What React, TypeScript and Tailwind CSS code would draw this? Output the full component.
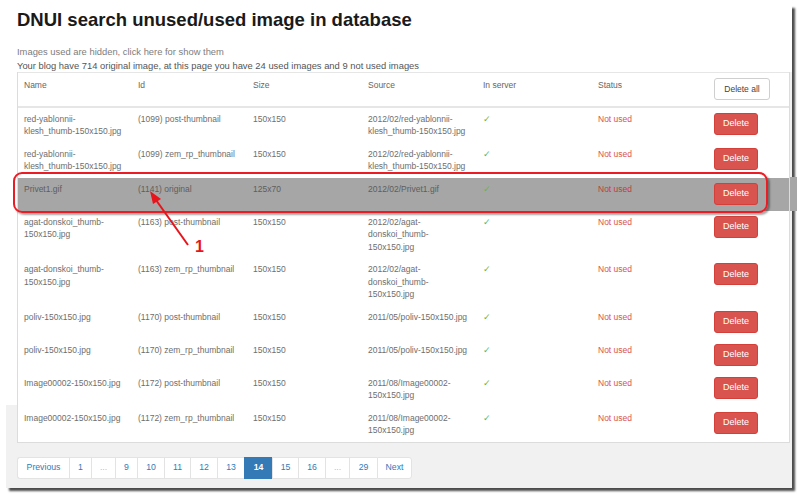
import React from "react";

type Row = {
  name: string[];
  id: string;
  size: string;
  source: string[];
  hl?: boolean;
};

const rows: Row[] = [
  { name: ["red-yablonnii-", "klesh_thumb-150x150.jpg"], id: "(1099) post-thumbnail", size: "150x150", source: ["2012/02/red-yablonnii-", "klesh_thumb-150x150.jpg"] },
  { name: ["red-yablonnii-", "klesh_thumb-150x150.jpg"], id: "(1099) zem_rp_thumbnail", size: "150x150", source: ["2012/02/red-yablonnii-", "klesh_thumb-150x150.jpg"] },
  { name: ["Privet1.gif"], id: "(1141) original", size: "125x70", source: ["2012/02/Privet1.gif"], hl: true },
  { name: ["agat-donskoi_thumb-", "150x150.jpg"], id: "(1163) post-thumbnail", size: "150x150", source: ["2012/02/agat-", "donskoi_thumb-", "150x150.jpg"] },
  { name: ["agat-donskoi_thumb-", "150x150.jpg"], id: "(1163) zem_rp_thumbnail", size: "150x150", source: ["2012/02/agat-", "donskoi_thumb-", "150x150.jpg"] },
  { name: ["poliv-150x150.jpg"], id: "(1170) post-thumbnail", size: "150x150", source: ["2011/05/poliv-150x150.jpg"] },
  { name: ["poliv-150x150.jpg"], id: "(1170) zem_rp_thumbnail", size: "150x150", source: ["2011/05/poliv-150x150.jpg"] },
  { name: ["Image00002-150x150.jpg"], id: "(1172) post-thumbnail", size: "150x150", source: ["2011/08/Image00002-", "150x150.jpg"] },
  { name: ["Image00002-150x150.jpg"], id: "(1172) zem_rp_thumbnail", size: "150x150", source: ["2011/08/Image00002-", "150x150.jpg"] },
];

const pages: { label: string; w: string; active?: boolean; dim?: boolean }[] = [
  { label: "Previous", w: "w-[52px]" },
  { label: "1", w: "w-[22px]" },
  { label: "...", w: "w-[24px]", dim: true },
  { label: "9", w: "w-[22px]" },
  { label: "10", w: "w-[27px]" },
  { label: "11", w: "w-[26px]" },
  { label: "12", w: "w-[27px]" },
  { label: "13", w: "w-[27px]" },
  { label: "14", w: "w-[28px]", active: true },
  { label: "15", w: "w-[26px]" },
  { label: "16", w: "w-[27px]" },
  { label: "...", w: "w-[24px]", dim: true },
  { label: "29", w: "w-[28px]" },
  { label: "Next", w: "w-[35px]" },
];

function Lines({ lines }: { lines: string[] }) {
  return (
    <>
      {lines.map((l, i) => (
        <div key={i} className="whitespace-nowrap">{l}</div>
      ))}
    </>
  );
}

export default function App() {
  const cell = "pl-[6px] pr-[7px] pt-[5px] pb-[5px] align-top text-left font-normal";
  return (
    <div className="relative w-[800px] h-[495px] bg-white overflow-hidden font-['Liberation_Sans',Arial,sans-serif]">
      <div className="pl-[6px] pt-[5px]">
        <div className="flex w-[786px] h-[483px] bg-[#f1f1f1] shadow-[3px_3px_2px_rgba(0,0,0,0.7)]">
          <div className="w-[11px] flex flex-col">
            <div className="h-[400px] bg-white" />
          </div>
          <div className="w-[775px] flex flex-col">
            <div className="h-[67px] bg-white">
              <h1 className="pt-[4px] text-[18.5px] leading-[22px] font-bold text-[#1a1a1a]">
                DNUI search unused/used image in database
              </h1>
              <div className="mt-[14px] text-[9.4px] leading-[14px] text-[#7d7d7d]">
                Images used are hidden, click here for show them
              </div>
              <div className="text-[9.4px] leading-[14px] text-[#555]">
                Your blog have 714 original image, at this page you have 24 used images and 9 not used images
              </div>
            </div>
            <div className="w-[773px] bg-white border-x border-b border-[#dcdcdc]">
              <table className="table-fixed w-full border-collapse text-[8.5px] leading-[12.5px] text-[#6e6e6e]">
                <colgroup>
                  <col className="w-[114px]" />
                  <col className="w-[115px]" />
                  <col className="w-[115px]" />
                  <col className="w-[115px]" />
                  <col className="w-[115px]" />
                  <col className="w-[116px]" />
                  <col />
                </colgroup>
                <thead>
                  <tr className="h-[34px] border-t border-b-2 border-[#e6e6e6] text-[#666]">
                    <th className={cell + " pt-[6px]"}>Name</th>
                    <th className={cell + " pt-[6px]"}>Id</th>
                    <th className={cell + " pt-[6px]"}>Size</th>
                    <th className={cell + " pt-[6px]"}>Source</th>
                    <th className={cell + " pt-[6px]"}>In server</th>
                    <th className={cell + " pt-[6px]"}>Status</th>
                    <th className={cell}>
                      <div className="w-[56px] h-[22px] flex items-center justify-center border border-[#cfcfcf] rounded-[3px] bg-white text-[#444]">
                        Delete all
                      </div>
                    </th>
                  </tr>
                </thead>
                <tbody>
                  {rows.map((r, i) => (
                    <tr key={i} className={r.hl ? "bg-[#a6a6a6] text-[#5e5e5e]" : ""}>
                      <td className={cell}><Lines lines={r.name} /></td>
                      <td className={cell}>{r.id}</td>
                      <td className={cell}>{r.size}</td>
                      <td className={cell}><Lines lines={r.source} /></td>
                      <td className={cell}>
                        <span className="font-['DejaVu_Sans',sans-serif] text-[9px] text-[#5cb85c]">✓</span>
                      </td>
                      <td className={cell}>
                        <span className={r.hl ? "text-[#c73a3a]" : "text-[#d9534f]"}>Not used</span>
                      </td>
                      <td className={cell + " pb-[6px]"}>
                        <div className="w-[44px] h-[22px] flex items-center justify-center rounded-[3px] bg-[#d9534f] border border-[#d43f3a] text-white text-[9px]">
                          Delete
                        </div>
                      </td>
                    </tr>
                  ))}
                </tbody>
              </table>
            </div>
            <div className="mt-[14px] flex text-[8.7px] text-[#337ab7]">
              {pages.map((p, i) => (
                <div
                  key={i}
                  className={
                    "h-[22px] flex items-center justify-center border-y border-l last:border-r first:rounded-l-[3px] last:rounded-r-[3px] " +
                    p.w +
                    (p.active
                      ? " bg-[#337ab7] border-[#337ab7] text-white font-bold"
                      : " bg-white border-[#e3e3e3]") +
                    (p.dim ? " text-[#bbbbbb]" : "")
                  }
                >
                  {p.label}
                </div>
              ))}
            </div>
          </div>
        </div>
      </div>

      {/* annotation overlays */}
      <div className="absolute left-[790px] top-[177px] w-[7px] h-[34px] bg-[#a6a6a6]" />
      <div className="absolute left-[13px] top-[172px] w-[755px] h-[41px] rounded-[9px] border-2 border-[#ec1c24] shadow-[2px_2px_2px_rgba(0,0,0,0.35)]" />
      <svg className="absolute left-0 top-0" width="800" height="495" viewBox="0 0 800 495">
        <line x1="188" y1="245" x2="156" y2="200" stroke="#e8141b" strokeWidth="2" />
        <polygon points="150,191 161,199 153,204" fill="#e8141b" />
      </svg>
      <div className="absolute left-[195px] top-[238px] text-[16px] leading-[18px] font-bold text-[#e8141b]">1</div>
    </div>
  );
}
